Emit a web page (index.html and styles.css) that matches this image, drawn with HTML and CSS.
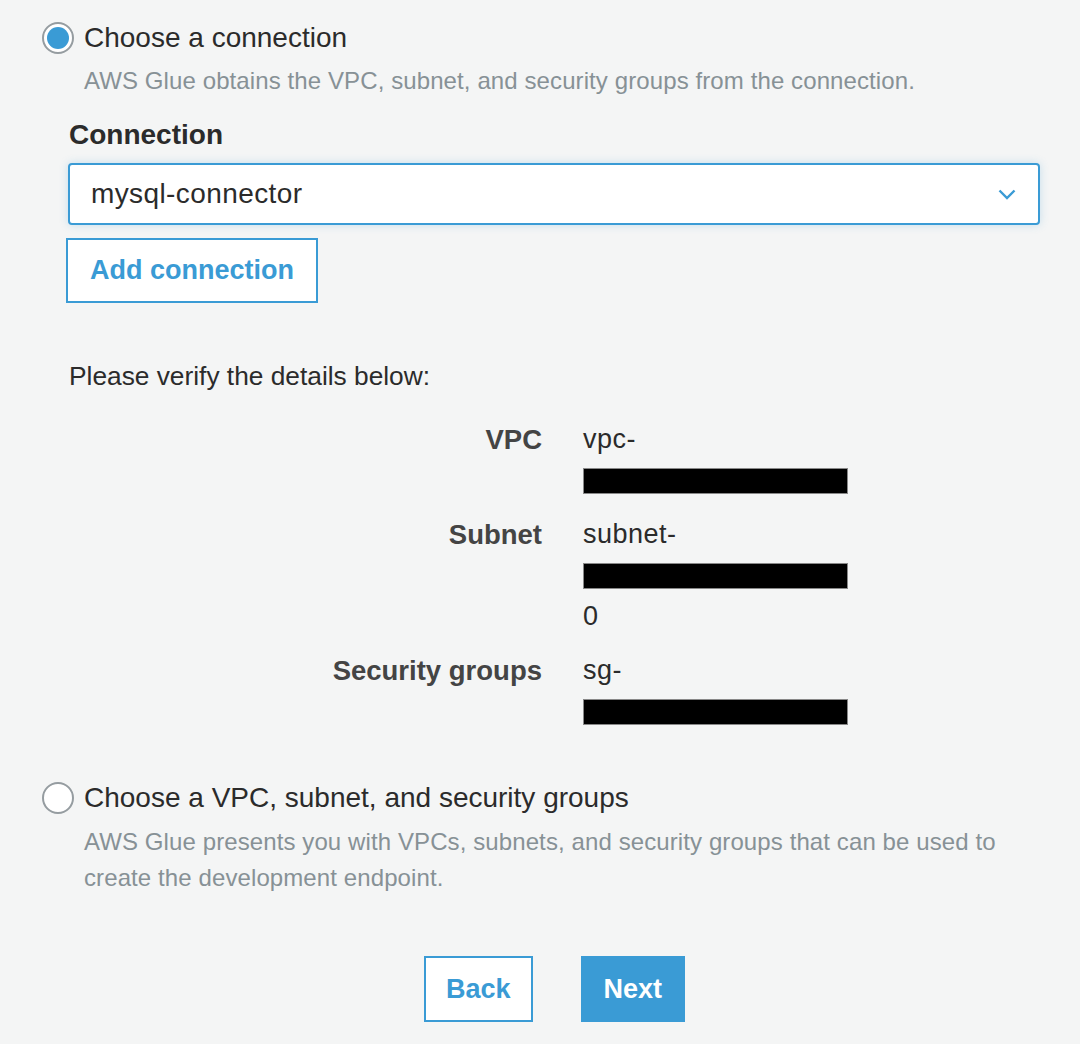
FILE: index.html
```html
<!DOCTYPE html>
<html lang="en">
<head>
<meta charset="utf-8">
<title>Networking</title>
<link rel="stylesheet" href="styles.css">
</head>
<body>
<div class="page">
  <div class="option">
    <div class="option-head">
      <span class="radio radio-checked"></span>
      <span class="option-title">Choose a connection</span>
    </div>
    <p class="option-desc">AWS Glue obtains the VPC, subnet, and security groups from the connection.</p>
  </div>

  <div class="conn">
    <div class="field-label">Connection</div>
    <div class="select">
      <span class="select-value">mysql-connector</span>
      <svg class="chevron" width="18" height="11" viewBox="0 0 18 11"><path d="M1.5 1.5 L9 9 L16.5 1.5" fill="none" stroke="#3a9bd5" stroke-width="2.4"/></svg>
    </div>
    <button class="btn btn-outline btn-add">Add connection</button>

    <p class="verify">Please verify the details below:</p>

    <div class="details">
      <div class="d-label">VPC</div>
      <div class="d-value"><div>vpc-</div><div><span class="redact"></span></div></div>
      <div class="d-label">Subnet</div>
      <div class="d-value"><div>subnet-</div><div><span class="redact"></span></div><div>0</div></div>
      <div class="d-label">Security groups</div>
      <div class="d-value"><div>sg-</div><div><span class="redact"></span></div></div>
    </div>
  </div>

  <div class="option option-2">
    <div class="option-head">
      <span class="radio"></span>
      <span class="option-title">Choose a VPC, subnet, and security groups</span>
    </div>
    <p class="option-desc option-desc-2">AWS Glue presents you with VPCs, subnets, and security groups that can be used to create the development endpoint.</p>
  </div>

  <div class="actions">
    <button class="btn btn-outline btn-back">Back</button>
    <button class="btn btn-primary">Next</button>
  </div>
</div>
</body>
</html>
```

FILE: styles.css
```css
html, body {
  margin: 0;
  padding: 0;
  background: #f4f5f5;
}
body {
  font-family: "Liberation Sans", Arial, sans-serif;
  color: #2e2e2e;
  width: 1080px;
  height: 1044px;
  overflow: hidden;
}
.page {
  padding: 22px 40px 0 42px;
}
.option-head {
  display: flex;
  align-items: center;
  gap: 10px;
  height: 32px;
}
.radio {
  width: 28px;
  height: 28px;
  border: 2px solid #959ca0;
  border-radius: 50%;
  background: #fff;
  box-sizing: content-box;
  display: flex;
  align-items: center;
  justify-content: center;
  flex: none;
}
.radio-checked::after {
  content: "";
  width: 22px;
  height: 22px;
  border-radius: 50%;
  background: #3a9bd5;
}
.option-title {
  font-size: 28px;
  line-height: 32px;
  color: #2b2b2b;
}
.option-desc {
  margin: 9px 0 0 42px;
  font-size: 24px;
  letter-spacing: 0.1px;
  line-height: 36px;
  color: #879196;
}
.conn {
  padding-left: 27px;
  margin-top: 20px;
}
.field-label {
  font-size: 28px;
  font-weight: bold;
  line-height: 32px;
  color: #2b2b2b;
}
.select {
  margin: 12px 0 0 -1px;
  height: 62px;
  box-sizing: border-box;
  border: 2px solid #3a9bd5;
  border-radius: 4px;
  background: #fff;
  box-shadow: 0 0 8px rgba(58, 155, 213, 0.25);
  display: flex;
  align-items: center;
  justify-content: space-between;
  padding: 0 22px 0 21px;
}
.select-value {
  font-size: 28px;
  letter-spacing: 0.4px;
  color: #2b2b2b;
}
.chevron {
  display: block;
}
.btn {
  font-family: "Liberation Sans", Arial, sans-serif;
  font-size: 27px;
  font-weight: bold;
  height: 66px;
  box-sizing: border-box;
  padding: 0 21px;
  border: 2px solid #3a9bd5;
  border-radius: 0;
  cursor: pointer;
}
.btn-outline {
  background: #fff;
  color: #3a9bd5;
}
.btn-primary {
  background: #3a9bd5;
  color: #fff;
}
.btn-back {
  padding: 0 20px;
}
.btn-add {
  display: block;
  margin: 13px 0 0 -3px;
  height: 65px;
  padding: 0 22px;
}
.verify {
  margin: 53px 0 0 0;
  font-size: 26.3px;
  line-height: 41px;
  color: #2b2b2b;
}
.details {
  display: grid;
  grid-template-columns: 473px 1fr;
  column-gap: 41px;
  row-gap: 13px;
  margin-top: 22px;
}
.d-label {
  text-align: right;
  font-weight: bold;
  font-size: 27.5px;
  line-height: 41px;
  color: #444;
}
.d-value {
  font-size: 27px;
  letter-spacing: 0.5px;
  line-height: 41px;
  color: #2b2b2b;
}
.d-value > div {
  height: 41px;
  display: flex;
  align-items: center;
}
.redact {
  display: block;
  width: 263px;
  height: 24px;
  background: #000;
  box-shadow: 0 0 0 1px #888;
  margin-left: 1px;
}
.option-2 {
  margin-top: 50px;
}
.option-desc-2 {
  margin-top: 10px;
  max-width: 930px;
}
.actions {
  margin: 60px 0 0 27px;
  display: flex;
  justify-content: center;
  gap: 48px;
}
```
